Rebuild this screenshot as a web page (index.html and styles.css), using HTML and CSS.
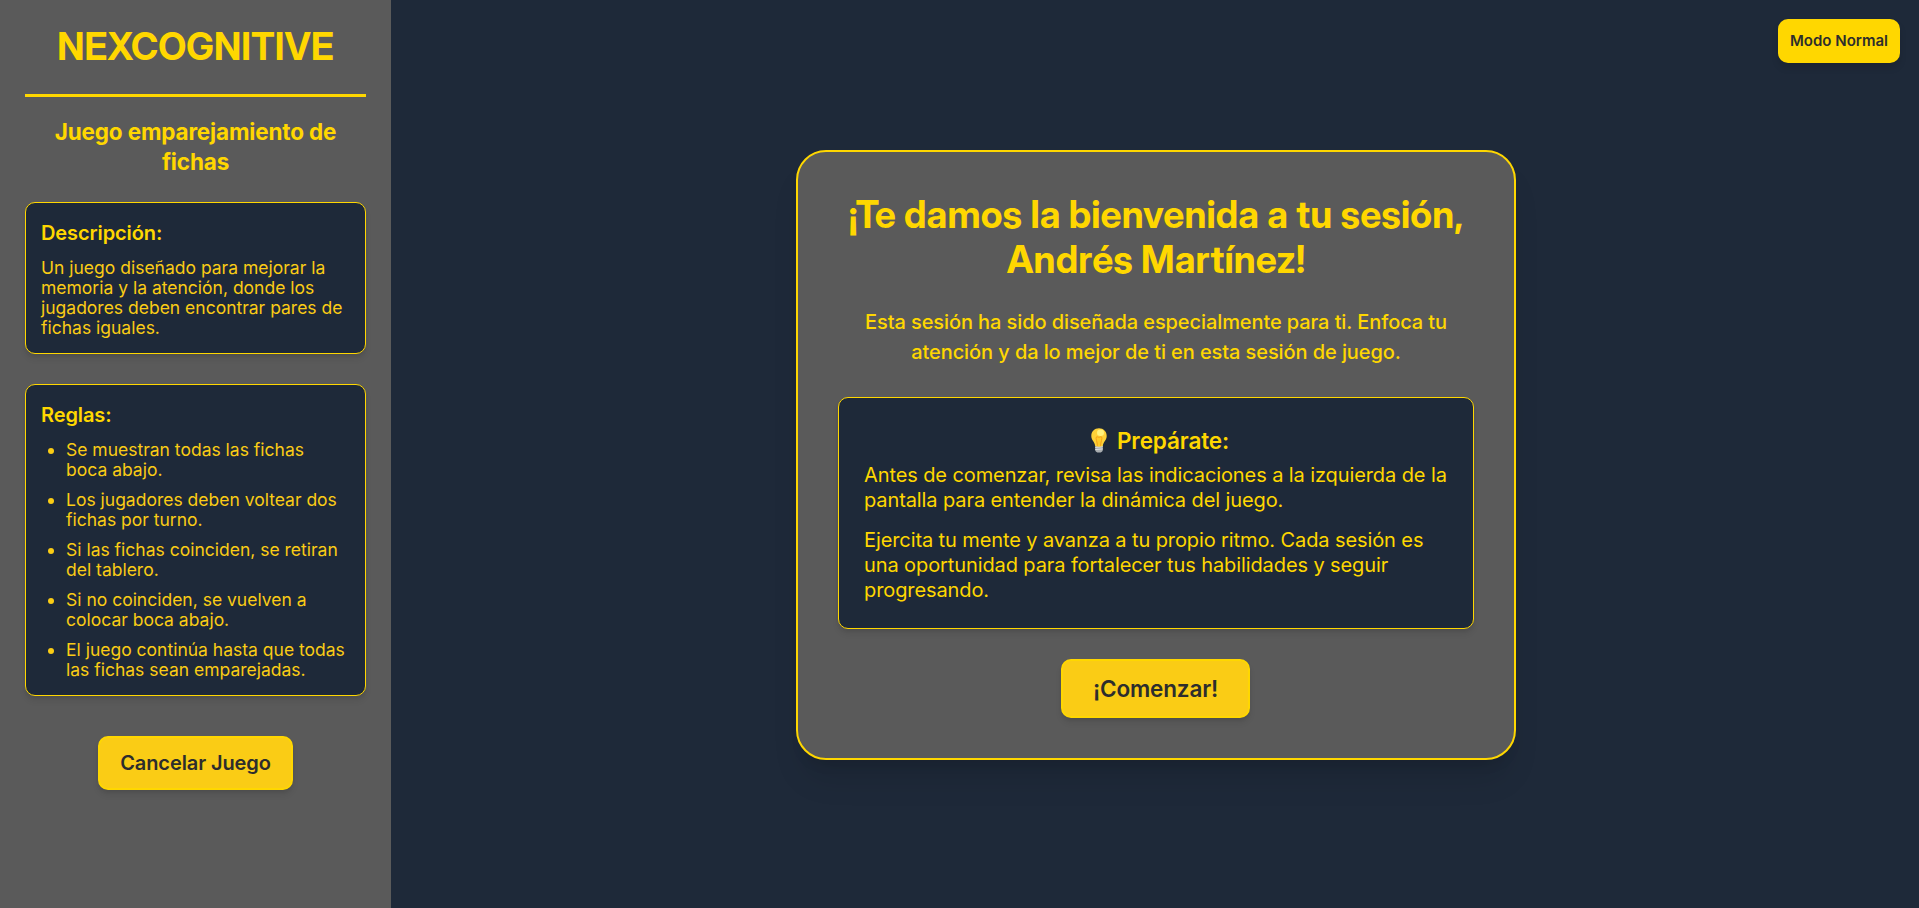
FILE: index.html
```html
<!DOCTYPE html>
<html lang="es">
<head>
<meta charset="utf-8">
<title>NEXCOGNITIVE</title>
<link rel="stylesheet" href="styles.css">
</head>
<body>
<div class="layout">
  <aside class="sidebar">
    <h1 class="brand">NEXCOGNITIVE</h1>
    <h2 class="game-title">Juego emparejamiento de fichas</h2>
    <section class="info-card">
      <h3 class="info-heading">Descripción:</h3>
      <p class="info-text">Un juego diseñado para mejorar la memoria y la atención, donde los jugadores deben encontrar pares de fichas iguales.</p>
    </section>
    <section class="info-card">
      <h3 class="info-heading">Reglas:</h3>
      <ul class="rules">
        <li>Se muestran todas las fichas boca abajo.</li>
        <li>Los jugadores deben voltear dos fichas por turno.</li>
        <li>Si las fichas coinciden, se retiran del tablero.</li>
        <li>Si no coinciden, se vuelven a colocar boca abajo.</li>
        <li>El juego continúa hasta que todas las fichas sean emparejadas.</li>
      </ul>
    </section>
    <button class="button cancel-button" type="button">Cancelar Juego</button>
  </aside>
  <main class="main">
    <article class="welcome">
      <h2 class="welcome-title">¡Te damos la bienvenida a tu sesión, Andrés Martínez!</h2>
      <p class="welcome-text">Esta sesión ha sido diseñada especialmente para ti. Enfoca tu atención y da lo mejor de ti en esta sesión de juego.</p>
      <section class="tips">
        <h3 class="tips-heading">
          <svg class="bulb" viewBox="0 0 16 25" aria-hidden="true">
            <path d="M4.2 17.5h7.6v4.2q0 2.8-3.8 2.8t-3.8-2.8z" fill="#a9adb0"/>
            <path d="M4.2 19.4l7.6-.7M4.2 21.6l7.6-.7" stroke="#e3e5e7" stroke-width=".9"/>
            <path d="M8 .3C3.500.3.3 3.500.3 7.900c0 4.400 3.400 5.600 3.900 10.100q3.800 1.300 7.600 0c.5-4.500 3.900-5.700 3.900-10.100C15.700 3.500 12.500.3 8 .3z" fill="#fdd138"/>
            <path d="M6.400 17.800C6.400 14 4.400 10.500 5.300 9.100c.8-1 1.700.2 2.700.2s1.900-1.200 2.700-.2c.9 1.400-1.100 4.900-1.100 8.700" fill="#ffca28" stroke="#f6a019" stroke-width="1"/>
            <ellipse cx="9.500" cy="4.700" rx="3.500" ry="3.200" fill="#fff27c"/>
          </svg>
          <span>Prepárate:</span>
        </h3>
        <p class="tips-text">Antes de comenzar, revisa las indicaciones a la izquierda de la pantalla para entender la dinámica del juego.</p>
        <p class="tips-text">Ejercita tu mente y avanza a tu propio ritmo. Cada sesión es una oportunidad para fortalecer tus habilidades y seguir progresando.</p>
      </section>
      <button class="button start-button" type="button">¡Comenzar!</button>
    </article>
    <button class="mode-button" type="button">Modo Normal</button>
  </main>
</div>
</body>
</html>
```
FILE: styles.css
```css
* {
  box-sizing: border-box;
  margin: 0;
  padding: 0;
}

body {
  font-family: Inter, "Liberation Sans", sans-serif;
  background: #1e2939;
  color: #ffd700;
}

.layout {
  display: flex;
  height: 908px;
  overflow: hidden;
}

.sidebar {
  display: flex;
  flex-direction: column;
  flex: 0 0 391px;
  padding: 24px 25px;
  background: #5a5a5a;
}

.brand {
  padding-bottom: 25px;
  margin-bottom: 20px;
  border-bottom: 3px solid #ffd700;
  font-family: "Inter Display", Inter, sans-serif;
  font-size: 37.5px;
  line-height: 45px;
  font-weight: 700;
  letter-spacing: 0.03px;
  text-align: center;
}

.game-title {
  margin-bottom: 25px;
  font-size: 22.5px;
  line-height: 30px;
  font-weight: 700;
  letter-spacing: -0.16px;
  text-align: center;
}

.info-card {
  margin-bottom: 30px;
  padding: 15px;
  border: 1px solid #ffd700;
  border-radius: 10px;
  background: #1e2939;
  box-shadow: 0 5px 7.5px -1px rgba(0, 0, 0, 0.1), 0 2.5px 5px -2.5px rgba(0, 0, 0, 0.1);
}

.info-heading {
  margin-bottom: 10px;
  font-size: 20px;
  line-height: 30px;
  font-weight: 600;
  letter-spacing: -0.1px;
}

.info-text,
.rules {
  font-size: 17.5px;
  line-height: 20px;
  color: #facc15;
}

.rules {
  display: flex;
  flex-direction: column;
  gap: 10px;
  padding-left: 25px;
}

.button {
  border: 2px solid #ffd700;
  border-radius: 10px;
  background: #facc15;
  color: #2d2d2d;
  font-family: inherit;
  font-weight: 600;
  box-shadow: 0 5px 7.5px -1px rgba(0, 0, 0, 0.1), 0 2.5px 5px -2.5px rgba(0, 0, 0, 0.1);
}

.cancel-button {
  align-self: center;
  width: 195px;
  height: 54px;
  margin-top: 10px;
  font-size: 20px;
  letter-spacing: -0.1px;
}

.main {
  position: relative;
  display: flex;
  flex: 1;
  align-items: center;
  justify-content: center;
  padding: 2px 0 0 2px;
}

.welcome {
  display: flex;
  flex-direction: column;
  width: 720px;
  padding: 40px;
  border: 2px solid #ffd700;
  border-radius: 30px;
  background: #5a5a5a;
  box-shadow: 0 25px 31px -6px rgba(0, 0, 0, 0.1), 0 10px 12.5px -7.5px rgba(0, 0, 0, 0.1);
}

.welcome-title {
  margin-bottom: 25px;
  font-family: "Inter Display", Inter, sans-serif;
  font-size: 37.5px;
  line-height: 45px;
  font-weight: 700;
  letter-spacing: 0.12px;
  text-align: center;
}

.welcome-text {
  margin-bottom: 30px;
  padding: 0 20px;
  font-size: 20px;
  line-height: 30px;
  font-weight: 500;
  letter-spacing: -0.09px;
  text-align: center;
}

.tips {
  padding: 25px;
  border: 1px solid #ffd700;
  border-radius: 10px;
  background: #1e2939;
  box-shadow: 0 5px 7.5px -1px rgba(0, 0, 0, 0.1), 0 2.5px 5px -2.5px rgba(0, 0, 0, 0.1);
}

.tips-heading {
  display: flex;
  justify-content: center;
  gap: 10px;
  margin-bottom: 5px;
  padding-left: 8px;
  font-size: 22.5px;
  line-height: 35px;
  font-weight: 600;
  letter-spacing: -0.12px;
}

.bulb {
  width: 16px;
  height: 25px;
  margin-top: 5px;
}

.tips-text {
  font-size: 20px;
  line-height: 25px;
  letter-spacing: -0.1px;
}

.tips-text + .tips-text {
  margin-top: 15px;
}

.start-button {
  align-self: center;
  width: 189px;
  height: 59px;
  margin-top: 30px;
  margin-right: 1px;
  font-size: 22.5px;
  letter-spacing: -0.15px;
}

.mode-button {
  position: absolute;
  top: 19px;
  right: 19px;
  width: 122px;
  height: 44px;
  padding-bottom: 1px;
  border: 0;
  border-radius: 10px;
  background: #ffd700;
  color: #2d2d2d;
  font-family: inherit;
  font-size: 15px;
  font-weight: 600;
  box-shadow: 0 5px 7.5px rgba(0, 0, 0, 0.12);
}
```
